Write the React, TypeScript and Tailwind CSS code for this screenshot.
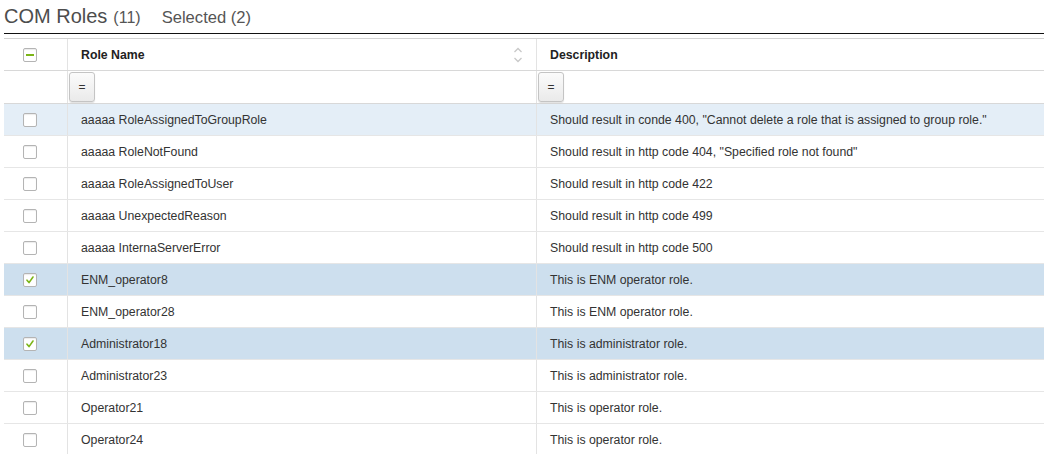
import React from "react";

const rows: { name: string; desc: string; checked?: boolean; hover?: boolean }[] = [
  { name: "aaaaa RoleAssignedToGroupRole", desc: 'Should result in conde 400, "Cannot delete a role that is assigned to group role."', hover: true },
  { name: "aaaaa RoleNotFound", desc: 'Should result in http code 404, "Specified role not found"' },
  { name: "aaaaa RoleAssignedToUser", desc: "Should result in http code 422" },
  { name: "aaaaa UnexpectedReason", desc: "Should result in http code 499" },
  { name: "aaaaa InternaServerError", desc: "Should result in http code 500" },
  { name: "ENM_operator8", desc: "This is ENM operator role.", checked: true },
  { name: "ENM_operator28", desc: "This is ENM operator role." },
  { name: "Administrator18", desc: "This is administrator role.", checked: true },
  { name: "Administrator23", desc: "This is administrator role." },
  { name: "Operator21", desc: "This is operator role." },
  { name: "Operator24", desc: "This is operator role." },
];

function Checkbox({ state }: { state: "none" | "checked" | "partial" }) {
  return (
    <div className="w-[14px] h-[14px] rounded-[2px] border border-[#b4b4b4] bg-white flex items-center justify-center shadow-[inset_0_1px_1px_rgba(0,0,0,0.08)]">
      {state === "checked" && (
        <svg width="10" height="10" viewBox="0 0 10 10">
          <path d="M2 5.2 L4 7.6 L8 2" fill="none" stroke="#7cb518" strokeWidth="1.6" strokeLinecap="round" strokeLinejoin="round" />
        </svg>
      )}
      {state === "partial" && <div className="w-[8px] h-[2px] bg-[#7cb518]" />}
    </div>
  );
}

function FilterButton() {
  return (
    <div className="w-[26px] h-[30px] rounded-[3px] border border-[#c4c4c4] bg-gradient-to-b from-[#fbfbfb] to-[#eaeaea] shadow-[0_1px_1px_rgba(0,0,0,0.12)] flex items-center justify-center text-[12px] text-[#333]">
      =
    </div>
  );
}

export default function App() {
  return (
    <div className="w-[1044px] h-[454px] overflow-hidden bg-white pl-[4px]" style={{ fontFamily: '"Liberation Sans", Arial, sans-serif' }}>
      <div className="h-[33px] flex items-baseline pt-[3px] text-[#4d4d4d]">
        <span className="text-[20px] leading-[26px]">COM Roles</span>
        <span className="text-[16px] ml-[6px] text-[#555]">(11)</span>
        <span className="text-[16.6px] ml-[21px] text-[#555]">Selected (2)</span>
      </div>
      <div className="h-[1px] bg-[#111]" />
      <div className="mt-[4px] border-t border-[#d2d2d2] text-[12.3px] text-[#333]">
        <div className="grid grid-cols-[64px_469px_1fr] h-[32px] border-b border-[#d8d8d8]">
          <div className="flex items-center pl-[19px] border-r border-[#e3e3e3]">
            <Checkbox state="partial" />
          </div>
          <div className="flex items-center justify-between pl-[13px] pr-[13px] border-r border-[#e3e3e3] font-bold text-[#222]">
            <span className="pt-[2px]">Role Name</span>
            <svg width="10" height="18" viewBox="0 0 10 18">
              <path d="M1.5 6 L5 2.5 L8.5 6" fill="none" stroke="#c8c8c8" strokeWidth="1.3" />
              <path d="M1.5 12 L5 15.5 L8.5 12" fill="none" stroke="#c8c8c8" strokeWidth="1.3" />
            </svg>
          </div>
          <div className="flex items-center pl-[13px] pt-[2px] font-bold text-[#222]">Description</div>
        </div>
        <div className="grid grid-cols-[64px_469px_1fr] h-[33px] border-b border-[#d8d8d8]">
          <div className="border-r border-[#e3e3e3]" />
          <div className="flex items-center pl-[1px] border-r border-[#e3e3e3]">
            <FilterButton />
          </div>
          <div className="flex items-center pl-[1px]">
            <FilterButton />
          </div>
        </div>
        {rows.map((r) => (
          <div
            key={r.name}
            className={`grid grid-cols-[64px_469px_1fr] h-[32px] border-b border-[#e6e6e6] ${
              r.checked ? "bg-[#cddfee]" : r.hover ? "bg-[#e4eef7]" : "bg-white"
            }`}
          >
            <div className="flex items-center pl-[19px] border-r border-[#e3e3e3]">
              <Checkbox state={r.checked ? "checked" : "none"} />
            </div>
            <div className="flex items-center pl-[13px] pt-[2px] border-r border-[#e3e3e3]">{r.name}</div>
            <div className="flex items-center pl-[13px] pt-[2px]">{r.desc}</div>
          </div>
        ))}
      </div>
    </div>
  );
}
